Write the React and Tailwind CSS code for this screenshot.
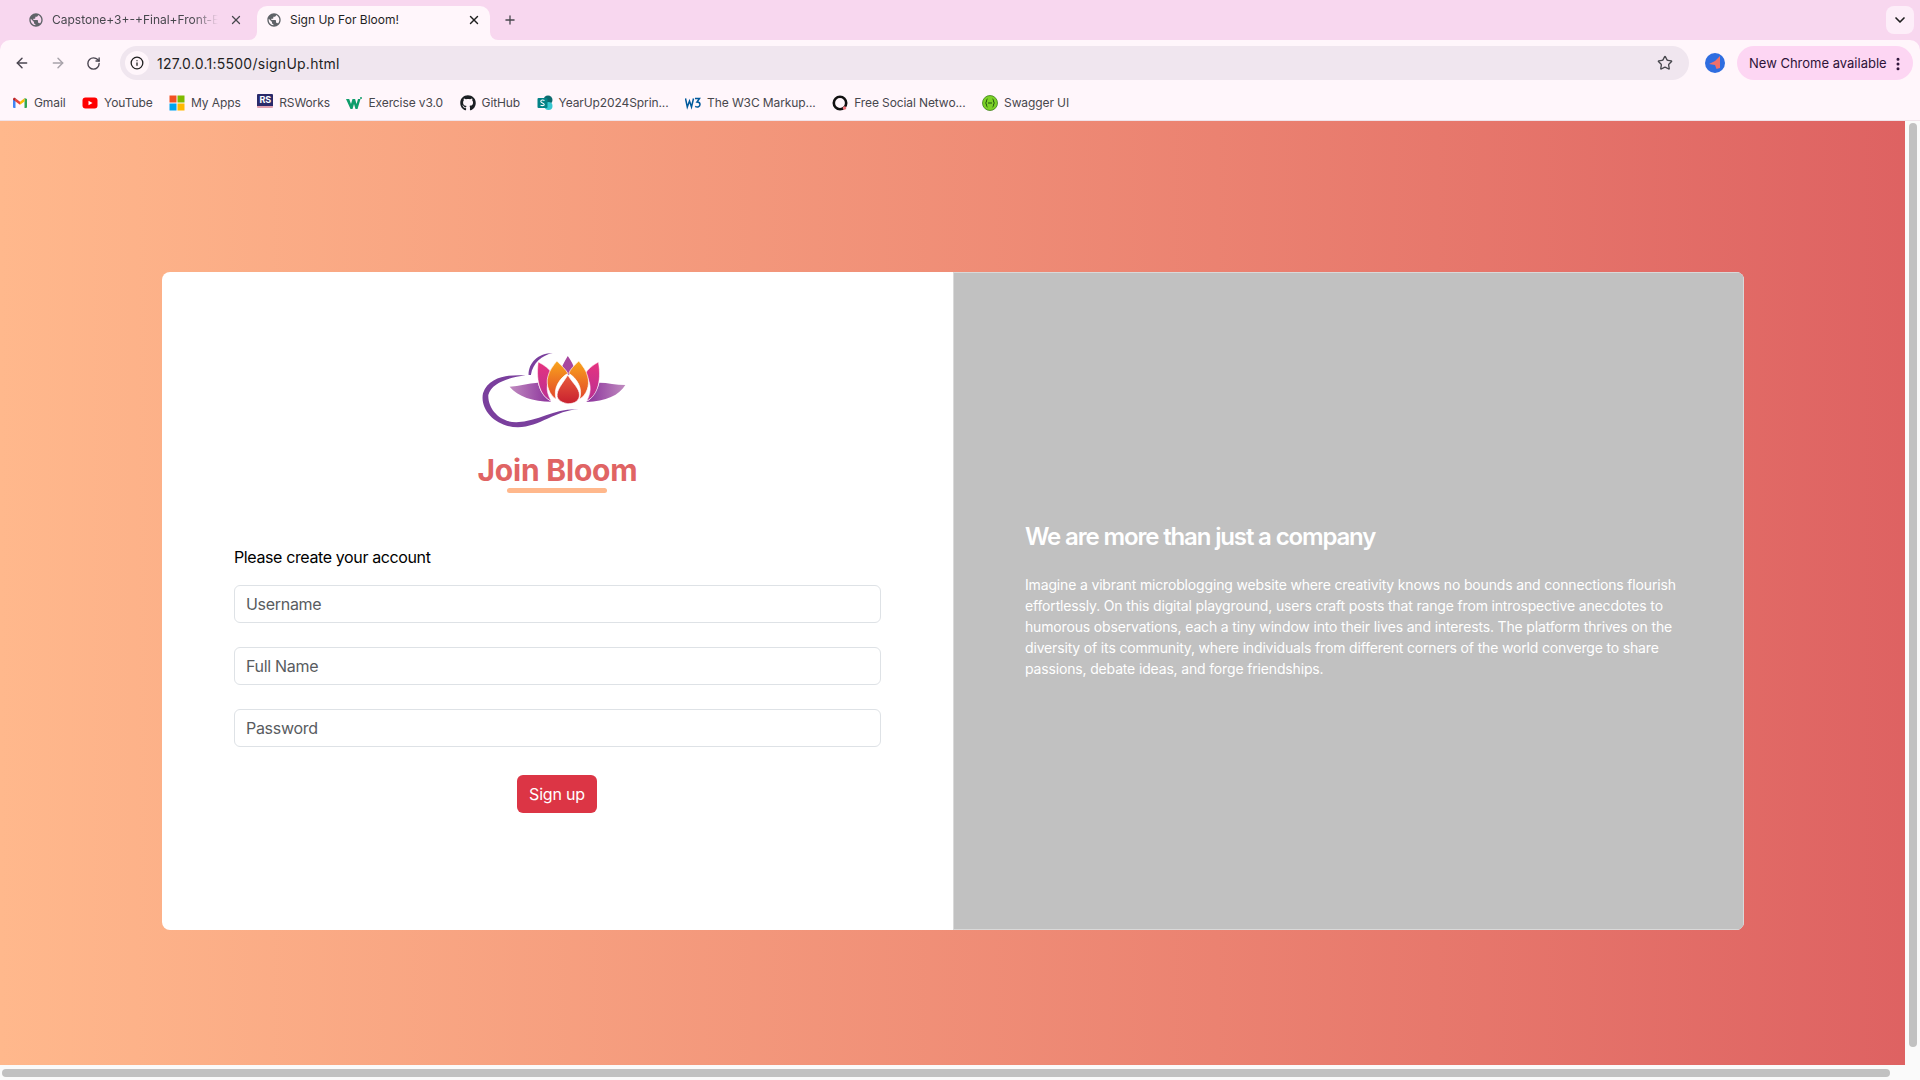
import React from "react";
import { ArrowLeft, ArrowRight, RotateCw, Info, Star, X, Plus, ChevronDown, EllipsisVertical } from "lucide-react";
import { MdPublic } from "react-icons/md";
import { FaGithub } from "react-icons/fa";

const Gmail = () => (
  <svg viewBox="0 0 16 16" className="w-4 h-4 shrink-0">
    <path d="M1 13V4l2.5-1L3.5 13H2a1 1 0 0 1-1-1z" fill="#4285f4" />
    <path d="M15 13V4l-2.5-1v10H14a1 1 0 0 0 1-1z" fill="#34a853" />
    <path d="M3.5 3.2 8 6.8v3L3.5 6.4z" fill="#ea4335" />
    <path d="M12.5 3.2 8 6.8v3l4.5-3.4z" fill="#fbbc04" />
    <path d="M1 4.4C1 3 2.5 2.4 3.5 3.2v3.2L1 4.6z" fill="#c5221f" />
  </svg>
);
const YouTube = () => (
  <svg viewBox="0 0 16 16" className="w-4 h-4 shrink-0">
    <rect x="0.5" y="2.5" width="15" height="11" rx="3" fill="#f00" />
    <path d="M6.5 5.7v4.6L10.5 8z" fill="#fff" />
  </svg>
);
const Apps = () => (
  <svg viewBox="0 0 16 16" className="w-4 h-4 shrink-0">
    <rect x="0.5" y="0.5" width="7" height="7" fill="#f25022" />
    <rect x="8.5" y="0.5" width="7" height="7" fill="#7fba00" />
    <rect x="0.5" y="8.5" width="7" height="7" fill="#00a4ef" />
    <rect x="8.5" y="8.5" width="7" height="7" fill="#ffb900" />
  </svg>
);
const RS = () => (
  <span className="w-4 h-[14px] mb-[3px] shrink-0 bg-[#2a2a6a] border-b-2 border-[#e0a0b0] text-white text-[9px] font-bold leading-[12px] text-center rounded-[1px]">RS</span>
);
const WLogo = () => (
  <svg viewBox="0 0 16 16" className="w-4 h-4 shrink-0">
    <path d="M0 4h3.200l1.800 5 1.500-5h2.600L10.500 9l1.500-5h2.500L11.500 14h-2L8 9l-1.500 5h-2z" fill="#0f9d6b" />
    <circle cx="15" cy="3" r="1" fill="#0f9d6b" />
  </svg>
);
const Share = () => (
  <svg viewBox="0 0 16 16" className="w-4 h-4 shrink-0">
    <circle cx="11" cy="5" r="4.500" fill="#0b6a6e" />
    <circle cx="11.500" cy="11" r="4" fill="#37c6d0" />
    <rect x="0.500" y="3" width="10" height="10" rx="1" fill="#038387" />
    <path d="M7.500 5.500C6 4.600 3.800 5 3.800 6.400c0 1.700 3.400 1.300 3.400 3 0 1.300-2.200 1.600-3.700.7" fill="none" stroke="#fff" strokeWidth="1.100" />
  </svg>
);
const W3 = () => (
  <svg viewBox="0 0 16 16" className="w-4 h-4 shrink-0">
    <path d="M0.500 3.500 2.300 12 4.500 6l2 6 2-8.500" fill="none" stroke="#005a9c" strokeWidth="1.500" />
    <path d="M10 3.500h4.500L12 7c2.500 0 3 1.500 3 2.500 0 2-2.500 3.300-4.800 1.800" fill="none" stroke="#005a9c" strokeWidth="1.500" />
  </svg>
);
const Ring = () => (
  <svg viewBox="0 0 16 16" className="w-4 h-4 shrink-0">
    <circle cx="8" cy="8" r="6.200" fill="none" stroke="#111" strokeWidth="2.600" />
    <circle cx="12.500" cy="13" r="1.800" fill="#f2727a" />
  </svg>
);
const Swagger = () => (
  <svg viewBox="0 0 16 16" className="w-4 h-4 shrink-0">
    <circle cx="8" cy="8" r="7.500" fill="#7bd126" stroke="#3f7f1a" strokeWidth="0.800" />
    <path d="M5.500 4C4 4 5 7.500 3.500 8 5 8.500 4 12 5.500 12M10.500 4C12 4 11 7.500 12.500 8 11 8.500 12 12 10.500 12M6 8h4" fill="none" stroke="#1f4d10" strokeWidth="1" />
  </svg>
);

const bookmarks = [
  [Gmail, "Gmail"],
  [YouTube, "YouTube"],
  [Apps, "My Apps"],
  [RS, "RSWorks"],
  [WLogo, "Exercise v3.0"],
  [() => <FaGithub className="w-4 h-4 shrink-0 text-[#1b1f23]" />, "GitHub"],
  [Share, "YearUp2024Sprin..."],
  [W3, "The W3C Markup..."],
  [Ring, "Free Social Netwo..."],
  [Swagger, "Swagger UI"],
];

const Logo = () => (
  <svg viewBox="67 30 451 240" className="w-[150px] h-[80px] mr-[2px]">
    <defs>
      <linearGradient id="petalL" x1="0" x2="1" y1="0" y2="0">
        <stop offset="0" stopColor="#c08cc0" />
        <stop offset="1" stopColor="#8a2f9a" />
      </linearGradient>
      <linearGradient id="petalR" x1="1" x2="0" y1="0" y2="0">
        <stop offset="0" stopColor="#c08cc0" />
        <stop offset="1" stopColor="#8a2f9a" />
      </linearGradient>
      <linearGradient id="pink" x1="0" x2="0" y1="0" y2="1">
        <stop offset="0" stopColor="#e6337f" />
        <stop offset="1" stopColor="#b92f93" />
      </linearGradient>
      <linearGradient id="orange" x1="0" x2="0" y1="0" y2="1">
        <stop offset="0" stopColor="#f9a51b" />
        <stop offset="1" stopColor="#e2452b" />
      </linearGradient>
      <linearGradient id="drop" x1="0" x2="0" y1="0" y2="1">
        <stop offset="0" stopColor="#e95b3c" />
        <stop offset="1" stopColor="#c8202f" />
      </linearGradient>
    </defs>
    <path d="M198 106C150 103 88 108 70 160C60 208 105 261 175 262C240 262 290 210 358 208C290 203 240 243 170 247C118 247 84 205 86 165C96 127 150 112 198 106Z" fill="#7a3f9d" />
    <path d="M207 105C207 68 235 40 280 39C247 46 220 68 214 105Z" fill="#7a3f9d" />
    <path d="M150 140C180 138 205 130 235 128C240 150 250 170 275 185C220 185 175 170 150 140Z" fill="url(#petalL)" />
    <path d="M498 135C470 135 445 128 420 128C415 150 400 175 380 186C440 185 480 165 498 135Z" fill="url(#petalR)" />
    <path d="M325 48C335 62 342 75 345 88L328 105L305 88C310 72 318 60 325 48Z" fill="#a8479f" />
    <path d="M236 66C255 75 270 88 278 100C262 125 255 150 275 183C245 170 228 130 236 66Z" fill="url(#pink)" stroke="#fff" strokeWidth="1.500" />
    <path d="M417 66C400 75 385 88 378 100C392 125 400 150 382 183C410 170 428 130 417 66Z" fill="url(#pink)" stroke="#fff" strokeWidth="1.500" />
    <path d="M292 63C305 75 320 90 325 100C300 115 280 145 290 178C270 165 258 135 265 110C270 90 280 78 292 63Z" fill="url(#orange)" stroke="#fff" strokeWidth="2" />
    <path d="M358 63C345 75 332 88 328 100C352 115 372 145 360 178C382 165 392 135 385 110C380 90 370 78 358 63Z" fill="url(#orange)" stroke="#fff" strokeWidth="2" />
    <path d="M325 105C310 130 290 150 293 170C298 187 320 191 328 191C345 191 360 182 360 165C360 145 340 130 325 105Z" fill="url(#drop)" stroke="#fff" strokeWidth="2" />
  </svg>
);

const Field = ({ placeholder }) => (
  <input
    placeholder={placeholder}
    className="w-full h-[38px] bg-white border border-[#dee2e6] rounded-[6px] pl-[11px] pr-3 text-base tracking-[-0.3px] text-[#212529] placeholder:text-[#595c5f] outline-none"
  />
);

export default function App() {
  return (
    <div className="w-[1920px] h-[1080px] overflow-hidden flex flex-col bg-[#f8d7ef] font-['Inter','Liberation_Sans',sans-serif]">
      {/* tab strip */}
      <div className="h-10 shrink-0 flex items-end">
        <div className="w-[245px] h-[34px] pl-[28px] pb-[6px] flex items-center text-xs text-[#47474d]">
          <MdPublic className="w-4 h-4 shrink-0 text-[#5f6368] mr-2" size={16} />
          <span className="w-[166px] overflow-hidden whitespace-nowrap [mask-image:linear-gradient(to_right,black_85%,transparent)]">Capstone+3+-+Final+Front-End</span>
          <X className="w-[14px] h-[14px] ml-[11px] text-[#47474d]" strokeWidth={2.2} />
        </div>
        <div className="relative ml-3 w-[233px] h-[34px] bg-[#fff6fb] rounded-t-[10px] pl-[9px] pb-[6px] flex items-center text-xs text-[#1f1f1f]">
          <svg viewBox="0 0 8 8" className="absolute left-[-8px] bottom-0 w-2 h-2"><path d="M8 0v8H0a8 8 0 0 0 8-8z" fill="#fff6fb" /></svg>
          <svg viewBox="0 0 8 8" className="absolute right-[-8px] bottom-0 w-2 h-2"><path d="M0 0v8h8a8 8 0 0 1-8-8z" fill="#fff6fb" /></svg>
          <MdPublic className="w-4 h-4 shrink-0 text-[#5f6368] mr-2" size={16} />
          <span className="flex-1 whitespace-nowrap">Sign Up For Bloom!</span>
          <X className="w-[14px] h-[14px] mr-[9px] text-[#1f1f1f]" strokeWidth={2.4} />
        </div>
        <div className="h-[34px] ml-[13px] pb-[6px] flex items-center">
          <Plus className="w-[14px] h-[14px] text-[#47474d]" strokeWidth={2.2} />
        </div>
        <div className="flex-1" />
        <div className="h-[28px] w-[28px] mb-[6px] mr-[6px] rounded-[8px] bg-[#fdeef9] flex items-center justify-center">
          <ChevronDown className="w-4 h-4 text-[#1f1f1f]" strokeWidth={2.5} />
        </div>
      </div>

      {/* toolbar */}
      <div className="h-10 shrink-0 bg-[#fff6fb] rounded-t-[10px] flex items-center pt-[6px] relative">
        <ArrowLeft className="w-4 h-4 ml-[14px] text-[#4a4550]" strokeWidth={2.2} />
        <ArrowRight className="w-4 h-4 ml-[20px] text-[#a8a3aa]" strokeWidth={2.2} />
        <RotateCw className="w-[15px] h-[15px] ml-[20px] text-[#4a4550]" strokeWidth={2.2} />
        <div className="ml-[19px] w-[1569px] h-[34px] rounded-full bg-[#f0e6ef] flex items-center pl-[5px] pr-[16px]">
          <div className="w-6 h-6 rounded-full bg-[#fff6fb] flex items-center justify-center">
            <Info className="w-[14px] h-[14px] text-[#1f1f1f]" strokeWidth={2.2} />
          </div>
          <span className="ml-[8px] pt-[1px] text-sm tracking-[0.25px] text-[#1f1f1f]">127.0.0.1:5500/signUp.html</span>
          <div className="flex-1" />
          <Star className="w-[16px] h-[16px] text-[#47474d]" strokeWidth={2} />
        </div>
        <div className="ml-4 w-5 h-5 rounded-full bg-[#2f6de0] flex items-center justify-center shrink-0">
          <svg viewBox="0 0 20 20" className="w-5 h-5"><path d="M4 11 10 8 15 3 15 15 11.500 16 10 12z" fill="#f0706a" /></svg>
        </div>
        <div className="ml-3 w-[176px] h-[34px] rounded-full bg-[#fdd6f3] flex items-center pl-3 pt-[1px] text-[13px] text-[#2d1338] shrink-0">
          <span className="whitespace-nowrap">New Chrome available</span>
          <EllipsisVertical className="absolute right-[14px] w-4 h-4 text-[#2d1338]" strokeWidth={2.5} />
        </div>
      </div>

      {/* bookmarks */}
      <div className="h-[41px] shrink-0 bg-[#fff6fb] flex items-center pl-3 pt-[5px] gap-[16.5px] text-xs tracking-[-0.1px] text-[#47474d] border-b border-[#f0e3ea]">
        {bookmarks.map(([Icon, label]) => (
          <div key={label} className="flex items-center gap-[6px] whitespace-nowrap">
            <Icon />
            <span>{label}</span>
          </div>
        ))}
      </div>

      {/* page + vertical scrollbar */}
      <div className="flex flex-1 min-h-0">
        <main className="flex-1 bg-gradient-to-r from-[#ffb88c] to-[#de6262] pt-[151px] pl-[162px]">
          <div className="w-[1582px] h-[658px] flex rounded-[8px] overflow-hidden bg-white">
            <section className="w-[791px] flex flex-col items-center pt-[78px]">
              <Logo />
              <h1 className="mt-[24px] text-[30px] leading-[33px] font-bold text-[#e06464] tracking-[-0.2px]">Join Bloom</h1>
              <div className="w-[100px] h-[5px] mt-[1px] mr-[1px] rounded-full bg-[#ffb88c]" />
              <form className="w-[647px] mt-[52px] flex flex-col">
                <p className="text-base leading-6 tracking-[-0.38px] text-black mb-4">Please create your account</p>
                <div className="flex flex-col gap-6">
                  <Field placeholder="Username" />
                  <Field placeholder="Full Name" />
                  <Field placeholder="Password" />
                </div>
                <button type="button" className="self-center mt-7 mr-[1px] w-20 h-[38px] rounded-[6px] bg-[#dc3545] text-white text-base tracking-[-0.2px]">Sign up</button>
              </form>
            </section>
            <section className="flex-1 bg-[#c1c1c1] border border-[#d9d9d9] flex flex-col justify-center pl-[71px] pr-[60px] pb-[1px] text-white">
              <h2 className="text-2xl leading-[29px] font-semibold tracking-[-1.15px] mb-[23px]">We are more than just a company</h2>
              <p className="text-sm leading-[21px] tracking-[-0.16px]">Imagine a vibrant microblogging website where creativity knows no bounds and connections flourish effortlessly. On this digital playground, users craft posts that range from introspective anecdotes to humorous observations, each a tiny window into their lives and interests. The platform thrives on the diversity of its community, where individuals from different corners of the world converge to share passions, debate ideas, and forge friendships.</p>
            </section>
          </div>
        </main>
        <div className="w-[15px] shrink-0 bg-[#fafafa] pt-[2px] pl-1 pr-[3px]">
          <div className="h-[924px] rounded-full bg-[#c1c1c1]" />
        </div>
      </div>

      {/* horizontal scrollbar */}
      <div className="h-[15px] shrink-0 bg-[#fafafa] pt-1 pl-[2px]">
        <div className="w-[1888px] h-2 rounded-full bg-[#c1c1c1]" />
      </div>
    </div>
  );
}
